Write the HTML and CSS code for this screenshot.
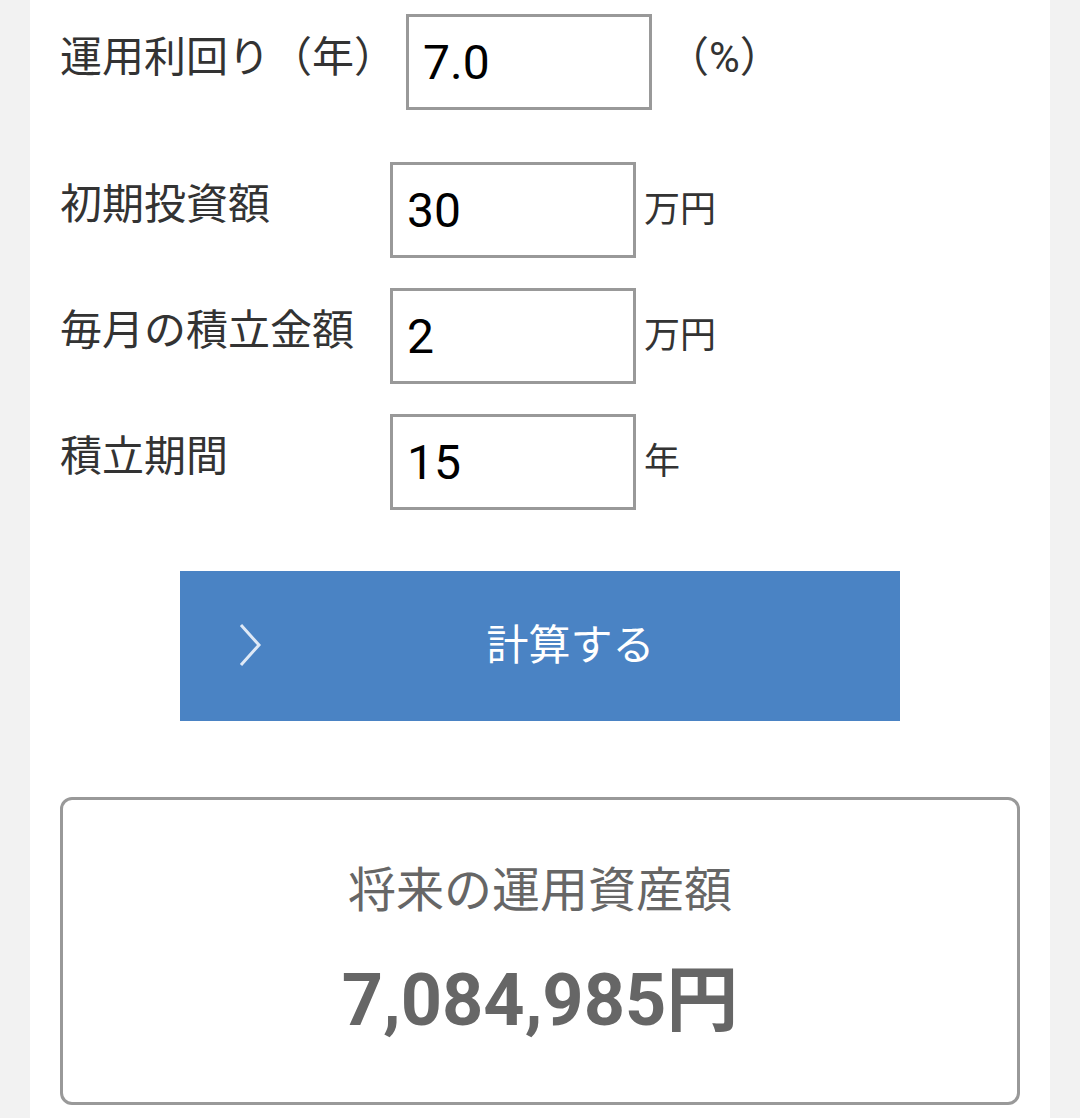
FILE: index.html
```html
<!DOCTYPE html>
<html lang="ja">
<head>
<meta charset="utf-8">
<title>積立シミュレーション</title>
<link rel="stylesheet" href="styles.css">
</head>
<body>
<div class="page">
  <div class="rate-row">
    <span class="rate-label">運用利回り（年）</span>
    <input class="box-input rate-input" type="text" value="7.0">
    <span class="rate-unit">（%）</span>
  </div>

  <div class="fields">
    <div class="field-row">
      <span class="field-label">初期投資額</span>
      <input class="box-input" type="text" value="30">
      <span class="field-unit">万円</span>
    </div>
    <div class="field-row">
      <span class="field-label">毎月の積立金額</span>
      <input class="box-input" type="text" value="2">
      <span class="field-unit">万円</span>
    </div>
    <div class="field-row">
      <span class="field-label">積立期間</span>
      <input class="box-input" type="text" value="15">
      <span class="field-unit">年</span>
    </div>
  </div>

  <button class="calc-btn" type="button">
    <svg class="chevron" width="24" height="44" viewBox="0 0 24 44" aria-hidden="true">
      <polyline points="3,2 21,22 3,42" fill="none" stroke="#dfe9f6" stroke-width="3"/>
    </svg>
    <span class="calc-text">計算する</span>
  </button>

  <div class="result">
    <div class="result-title">将来の運用資産額</div>
    <div class="result-value">7,084,985円</div>
  </div>
</div>
</body>
</html>
```

FILE: styles.css
```css
html, body {
  margin: 0;
  padding: 0;
}

body {
  background: #f2f2f2;
  font-family: Roboto, "Noto Sans CJK JP", sans-serif;
}

.page {
  width: 1020px;
  min-height: 1118px;
  margin: 0 30px;
  padding: 14px 30px 0;
  box-sizing: border-box;
  background: #fff;
}

.rate-row {
  display: flex;
  align-items: center;
  height: 96px;
}

.rate-label {
  font-size: 42px;
  color: #333;
  line-height: 1;
  margin-bottom: 8px;
}

.box-input {
  width: 246px;
  height: 96px;
  box-sizing: border-box;
  border: 3px solid #999;
  border-radius: 0;
  padding: 0 14px;
  margin: 0;
  font-family: Roboto, "Noto Sans CJK JP", sans-serif;
  font-size: 48px;
  color: #000;
  background: #fff;
  outline: none;
}

.rate-input {
  margin-left: 10px;
}

.rate-unit {
  margin-left: 15px;
  font-size: 42px;
  color: #333;
  line-height: 1;
  margin-bottom: 8px;
}

.fields {
  display: flex;
  flex-direction: column;
  gap: 30px;
  margin-top: 52px;
}

.field-row {
  display: flex;
  align-items: center;
}

.field-label {
  width: 330px;
  font-size: 42px;
  color: #333;
  line-height: 1;
  margin-bottom: 10px;
}

.field-unit {
  margin-left: 8px;
  font-size: 36px;
  color: #333;
  line-height: 1;
}

.calc-btn {
  display: flex;
  align-items: center;
  width: 720px;
  height: 150px;
  margin: 61px auto 0;
  padding: 0 0 0 58px;
  border: none;
  border-radius: 0;
  background: #4a83c4;
  color: #fff;
  font-family: Roboto, "Noto Sans CJK JP", sans-serif;
  cursor: pointer;
}

.chevron {
  flex: none;
  margin-top: -2px;
}

.calc-text {
  flex: 1;
  text-align: center;
  font-size: 42px;
  line-height: 1;
  margin-right: 21px;
}

.result {
  margin-top: 76px;
  height: 308px;
  box-sizing: border-box;
  border: 3px solid #999;
  border-radius: 12px;
  padding-top: 62px;
  text-align: center;
  color: #666;
}

.result-title {
  font-size: 48px;
  line-height: 58px;
}

.result-value {
  margin-top: 38px;
  font-size: 72px;
  font-weight: 700;
  line-height: 86px;
}
```
